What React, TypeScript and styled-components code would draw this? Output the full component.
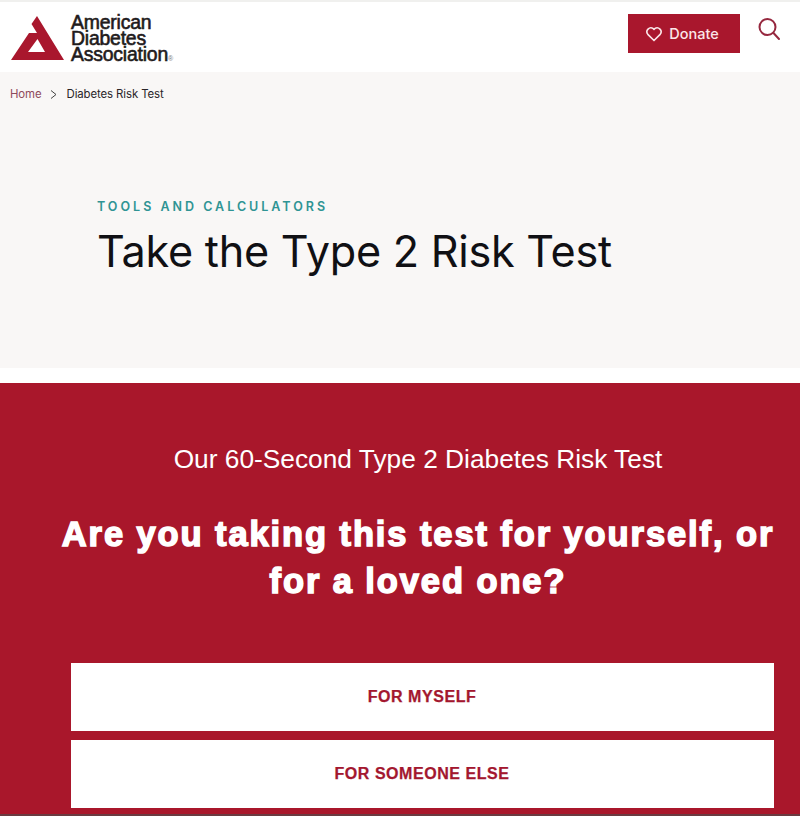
import styled, { createGlobalStyle } from "styled-components";

const GlobalStyle = createGlobalStyle`
  html, body {
    margin: 0;
    padding: 0;
    background-color: #fff;
  }
`;

const Page = styled.div`
  width: 800px;
  height: 816px;
  overflow: hidden;
  display: flex;
  flex-direction: column;
  font-family: "Inter", "Liberation Sans", sans-serif;
`;

const Header = styled.header`
  height: 70px;
  flex: none;
  border-top: 2px solid #f0f0ee;
  background-color: #fff;
  display: flex;
  align-items: flex-start;
  padding-left: 10px;
`;

const Logo = styled.div`
  display: flex;
  align-items: flex-start;
  margin-top: 12px;
  gap: 6px;
`;

const LogoMark = styled.svg`
  width: 55px;
  height: 48px;
`;

const LogoText = styled.div`
  font-family: "Liberation Sans", Arial, sans-serif;
  font-size: 19.4px;
  line-height: 16px;
  letter-spacing: -0.2px;
  font-weight: 400;
  -webkit-text-stroke: 0.6px #1f1b1c;
  color: #1f1b1c;
`;

const Reg = styled.span`
  font-size: 7px;
  letter-spacing: 0;
  -webkit-text-stroke: 0;
  color: #777;
`;

const HeaderActions = styled.div`
  margin-left: auto;
  display: flex;
  align-items: flex-start;
  padding-right: 19px;
  gap: 17px;
`;

const DonateButton = styled.button`
  margin-top: 12px;
  width: 112px;
  height: 39px;
  border: none;
  padding: 0 4px 0 0;
  background-color: #a9172d;
  color: #fbe6e8;
  font-family: "Inter", "Liberation Sans", sans-serif;
  font-size: 14.5px;
  font-weight: 500;
  display: flex;
  align-items: center;
  justify-content: center;
  gap: 6px;
`;

const SearchIcon = styled.svg`
  margin-top: 14px;
  width: 24px;
  height: 26px;
`;

const Hero = styled.section`
  height: 296px;
  flex: none;
  background-color: #f9f7f6;
  display: flex;
  flex-direction: column;
`;

const Breadcrumb = styled.nav`
  display: flex;
  align-items: center;
  padding: 14px 0 0 10px;
  height: 16px;
  font-size: 11.4px;
  letter-spacing: -0.1px;
  color: #2a2528;
`;

const Crumb = styled.span<{ $link?: boolean }>`
  color: ${(props) => (props.$link ? "#8f4a5c" : "#2a2528")};
`;

const CrumbArrow = styled.svg`
  width: 7px;
  height: 9px;
  margin: 0 10px 0 8px;
`;

const HeroBody = styled.div`
  padding: 97px 0 0 97px;
`;

const Eyebrow = styled.div`
  font-size: 12.5px;
  line-height: 16px;
  font-weight: 600;
  letter-spacing: 3px;
  color: #2f9494;
`;

const Title = styled.h1`
  margin: 10px 0 0;
  font-size: 43.2px;
  line-height: 52px;
  font-weight: 400;
  letter-spacing: -0.25px;
  color: #101014;
`;

const Gap = styled.div`
  height: 15px;
  flex: none;
  background-color: #fff;
`;

const Quiz = styled.section`
  flex: 1;
  background-color: #a9172b;
  display: flex;
  flex-direction: column;
  align-items: center;
  font-family: "Liberation Sans", Arial, sans-serif;
  color: #fff;
  padding-top: 60px;
  position: relative;
`;

const QuizKicker = styled.div`
  font-size: 26.3px;
  line-height: 32px;
  margin-left: 36px;
`;

const Question = styled.h2`
  margin: 36px 0 0 36px;
  width: 740px;
  text-align: center;
  font-size: 34.5px;
  line-height: 47px;
  font-weight: 700;
  letter-spacing: 1.9px;
  -webkit-text-stroke: 1.5px #fff;
`;

const Choices = styled.div`
  width: 703px;
  margin: 58px 0 0 44px;
  display: flex;
  flex-direction: column;
  gap: 9px;
`;

const Choice = styled.button`
  height: 68px;
  border: none;
  padding: 0;
  background-color: #fff;
  color: #a3172f;
  font-family: "Liberation Sans", Arial, sans-serif;
  font-size: 16px;
  font-weight: 700;
  letter-spacing: 0.55px;
  -webkit-text-stroke: 0.25px #a3172f;
`;

const BottomEdge = styled.div`
  position: absolute;
  left: 0;
  right: 0;
  bottom: 0;
  height: 2px;
  background-color: #6b3a40;
`;

export default function App() {
  return (
    <>
      <GlobalStyle />
      <Page>
        <Header>
          <Logo>
            <LogoMark viewBox="10 14 55 48">
              <path
                fill="#a9172d"
                fillRule="evenodd"
                d="M37 16 L64 60 H11 L29 33 H37 L31.5 24 Z M28 52 H45 L37.5 39 Z"
              />
            </LogoMark>
            <LogoText>
              <div>American</div>
              <div>Diabetes</div>
              <div>
                Association<Reg>®</Reg>
              </div>
            </LogoText>
          </Logo>
          <HeaderActions>
            <DonateButton>
              <svg width="18" height="16" viewBox="0 0 24 22" fill="none" stroke="currentColor" strokeWidth="2.2">
                <path d="M12 20 L3.5 11.5 A5.5 5.5 0 0 1 11 3.6 L12 4.6 L13 3.6 A5.5 5.5 0 0 1 20.5 11.5 Z" strokeLinejoin="round" />
              </svg>
              Donate
            </DonateButton>
            <SearchIcon viewBox="0 0 24 26" fill="none" stroke="#96283f" strokeWidth="2">
              <circle cx="10.5" cy="11" r="8" />
              <path d="M16.5 17 L22 23" strokeLinecap="round" />
            </SearchIcon>
          </HeaderActions>
        </Header>
        <Hero>
          <Breadcrumb>
            <Crumb $link>Home</Crumb>
            <CrumbArrow viewBox="0 0 7 9" fill="none" stroke="#444" strokeWidth="1">
              <path d="M1 0.5 L6 4.5 L1 8.5" />
            </CrumbArrow>
            <Crumb>Diabetes Risk Test</Crumb>
          </Breadcrumb>
          <HeroBody>
            <Eyebrow>TOOLS AND CALCULATORS</Eyebrow>
            <Title>Take the Type 2 Risk Test</Title>
          </HeroBody>
        </Hero>
        <Gap />
        <Quiz>
          <QuizKicker>Our 60-Second Type 2 Diabetes Risk Test</QuizKicker>
          <Question>Are you taking this test for yourself, or for a loved one?</Question>
          <Choices>
            <Choice>FOR MYSELF</Choice>
            <Choice>FOR SOMEONE ELSE</Choice>
          </Choices>
          <BottomEdge />
        </Quiz>
      </Page>
    </>
  );
}
